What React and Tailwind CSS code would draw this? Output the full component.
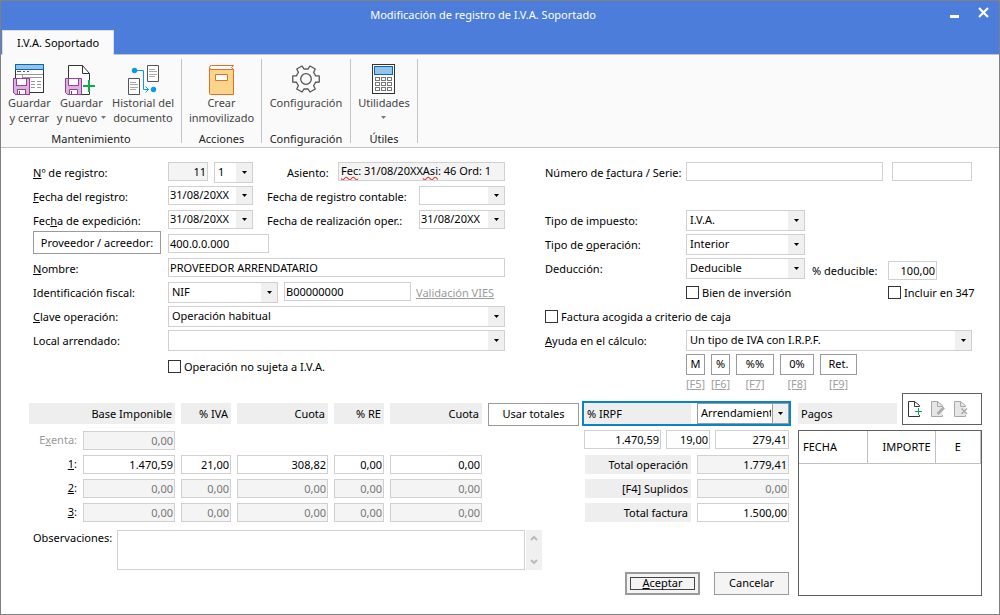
import { useState } from "react";
import clsx from "clsx";

const INPUT = "h-[19px] min-w-0 border border-[#d0d0d0] bg-white px-0.5 leading-4 text-black outline-none";
const INPUT_OFF = "h-[19px] min-w-0 border border-[#d0d0d0] bg-[#f4f4f4] px-0.5 leading-4 outline-none";
const BUTTON = "border border-[#9a9a9a] bg-white text-center text-black";
const HEAD = "h-[21px] bg-[#eeeeee] px-[3px] leading-[21px] font-normal";

const gearPath = [0, 60, 120, 180, 240, 300]
  .map((angle, i) => {
    const point = (r, deg) => {
      const a = ((angle + deg) * Math.PI) / 180;
      return `${(15 + r * Math.cos(a)).toFixed(2)} ${(15 + r * Math.sin(a)).toFixed(2)}`;
    };
    return `${i ? "A10 10 0 0 1" : "M"} ${point(10, -19)} L${point(13.6, -13)} L${point(13.6, 13)} L${point(10, 19)}`;
  })
  .join(" ");

function Floppy() {
  return (
    <g transform="translate(0 15)">
      <path d="M.5 .5H16.5V16.5H2.5L.5 14.5Z" fill="#d9b3dc" stroke="#9b3d9e" />
      <path d="M3.5 .5H13.5V7.5H3.5Z" fill="#fff" stroke="#9b3d9e" />
      <path d="M4.5 11.5H12.5V16.5H4.5Z" fill="#fff" stroke="#9b3d9e" />
      <path d="M6.5 13V16" stroke="#555" />
    </g>
  );
}

function SaveCloseIcon() {
  return (
    <svg width="32" height="32" viewBox="0 0 32 32" fill="none" shapeRendering="crispEdges" aria-hidden="true">
      <path d="M2.5 1.5H30.5V29.5H2.5Z" fill="#fff" stroke="#333" />
      <path d="M2.5 1.5H30.5V6.5H2.5Z" fill="#92c5ee" stroke="#0f65ad" />
      <path d="M4 8.5H8M10 8.5H12M14 8.5H16" stroke="#555" />
      <path d="M3 11.5H30M9.5 11V15" stroke="#999" />
      <path d="M10 14.5H29" stroke="#999" />
      <path d="M18 18.5H22M24 18.5H28M18 21.5H22M24 21.5H28M18 24.5H22M24 24.5H28" stroke="#999" />
      <Floppy />
    </svg>
  );
}

function SaveNewIcon() {
  return (
    <svg width="32" height="32" viewBox="0 0 32 32" fill="none" aria-hidden="true">
      <path d="M3.5 2.5H17.5L24.5 10.5V31.5H3.5Z" fill="#fff" stroke="#333" />
      <path d="M17.5 2.5V10.5H24.5" stroke="#333" />
      <path d="M17 17H32V29H17Z" fill="#fafafa" />
      <Floppy />
      <path d="M24 17V29M18 23H30" stroke="#12a84c" strokeWidth="2" />
    </svg>
  );
}

function HistoryIcon() {
  return (
    <svg width="33" height="32" viewBox="0 0 33 32" fill="none" aria-hidden="true">
      <path d="M20.5 2.5H31.5V18.5H20.5Z" fill="#fff" stroke="#555" />
      <path d="M22 6.5H28M22 8.5H30M22 11.5H30M22 13.5H28" stroke="#aaa" />
      <path d="M1.5 15.5H12.5V31.5H1.5Z" fill="#fff" stroke="#555" />
      <path d="M3 19.5H9M3 21.5H11M3 24.5H11M3 26.5H9" stroke="#aaa" />
      <path d="M8 7.5H16.5V26.5H22M18.5 23.5L21.5 26.5L18.5 29.5" stroke="#0a9be3" />
      <circle cx="7.5" cy="7.5" r="2.7" fill="#0a9be3" />
      <circle cx="26.5" cy="26.5" r="2.7" fill="#0a9be3" />
    </svg>
  );
}

function BookIcon() {
  return (
    <svg width="30" height="32" viewBox="0 0 30 32" fill="none" aria-hidden="true">
      <path d="M2.5 4.5V30.5Q2.5 31.5 3.5 31.5H26.5V6.5H4.5Q2.5 6.5 2.5 4.5Z" fill="#f8d58b" stroke="#e66f25" />
      <path d="M26.5 2.5H4.5Q2.5 2.5 2.5 4.5T4.5 6.5H26.5L24.5 4.5Z" fill="#fff" stroke="#e66f25" />
      <path d="M8.5 11.5H20.5V17.5H8.5Z" fill="#fff" stroke="#e66f25" />
    </svg>
  );
}

function GearIcon() {
  return (
    <svg width="30" height="32" viewBox="0 -1 30 32" fill="none" stroke="#555" strokeWidth="1.3" strokeLinejoin="round" aria-hidden="true">
      <path d={`${gearPath} A10 10 0 0 1 24.46 11.74Z`} />
      <circle cx="15" cy="15" r="5.3" />
    </svg>
  );
}

function CalculatorIcon() {
  return (
    <svg width="24" height="32" viewBox="0 0 24 32" fill="none" shapeRendering="crispEdges" aria-hidden="true">
      <path d="M.5 1.5H22.5V30.5H.5Z" fill="#fff" stroke="#333" />
      <path d="M2.5 3.5H20.5V11.5H2.5Z" fill="#92c5ee" stroke="#0f65ad" />
      {[14, 19, 24].map((y) =>
        [3, 9, 15].map((x) => <rect key={`${x}-${y}`} x={x + 0.5} y={y + 0.5} width="4" height="3" stroke="#777" />)
      )}
    </svg>
  );
}

function PageIcon({ kind }) {
  const on = kind === "add";
  return (
    <svg width="16" height="18" viewBox="0 0 16 18" fill="none" aria-hidden="true">
      <path
        d="M12.5 6.5V5.5L7.5 1.5H1.5V16.5H12.5V15"
        fill={on ? "#fff" : "#e6e6e6"}
        stroke={on ? "#333" : "#a8a8a8"}
      />
      <path d="M7.5 1.5V6.5H12.5" stroke={on ? "#333" : "#a8a8a8"} />
      {kind === "add" && <path d="M11.5 8V15M8 11.5H15" stroke="#12a84c" />}
      {kind === "edit" && <path d="M14 7.5L7.5 14" stroke="#aaa" strokeWidth="2.5" />}
      {kind === "delete" && <path d="M8.5 8.5L14 14M14 8.5L8.5 14" stroke="#aaa" strokeWidth="1.5" />}
    </svg>
  );
}

function Caret({ className }) {
  return (
    <svg width="5" height="3" viewBox="0 0 5 3" className={className} aria-hidden="true">
      <path d="M0 0H5L2.5 3Z" fill="currentColor" />
    </svg>
  );
}

function Combo({ id, label, value, date, className }) {
  return (
    <div className={clsx("relative min-w-0", date ? "h-[19px]" : "h-[21px]", className)}>
      <select
        id={id}
        aria-label={label}
        defaultValue={value}
        className={clsx(
          "block h-full w-full appearance-none border border-[#d0d0d0] bg-white pr-4 text-black outline-none",
          date ? "pb-0.5 pl-px leading-[15px]" : "pb-px pl-[3px] leading-[18px]"
        )}
      >
        <option>{value}</option>
      </select>
      <span className="pointer-events-none absolute inset-y-px right-px flex w-4 items-center justify-center bg-[#f0f0f0]">
        <Caret />
      </span>
    </div>
  );
}

function Check({ id, children }) {
  const [checked, setChecked] = useState(false);
  return (
    <label htmlFor={id} className="flex items-center gap-[3px] whitespace-nowrap">
      <input
        id={id}
        type="checkbox"
        checked={checked}
        onChange={() => setChecked(!checked)}
        className="size-[13px] shrink-0 appearance-none border border-[#333] bg-white checked:bg-[#333]"
      />
      {children}
    </label>
  );
}

function Row({ className, children }) {
  return <div className={clsx("flex h-[21px] items-start leading-[21px]", className)}>{children}</div>;
}

function Label({ htmlFor, className = "w-[135px]", children }) {
  return (
    <label htmlFor={htmlFor} className={clsx("shrink-0 whitespace-nowrap", className)}>
      {children}
    </label>
  );
}

function RibbonButton({ icon, lines, caret }) {
  return (
    <button type="button" className="flex flex-col items-center leading-[15px] whitespace-nowrap text-[#444]">
      {icon}
      <span>{lines[0]}</span>
      <span className="flex h-[15px] items-center gap-1">
        {lines[1]}
        {caret && <Caret className="text-[#777]" />}
      </span>
    </button>
  );
}

function RibbonGroup({ title, className, children }) {
  return (
    <section className={clsx("flex h-[84px] flex-col justify-between border-r border-[#c4c4c4]", className)}>
      <div className="flex justify-center gap-1.5 pt-1">{children}</div>
      <h2 className="text-center leading-2 text-[#222]">{title}</h2>
    </section>
  );
}

const amountRows = [
  { key: "1", values: ["1.470,59", "21,00", "308,82", "0,00", "0,00"], active: true },
  { key: "2", values: ["0,00", "0,00", "0,00", "0,00", "0,00"] },
  { key: "3", values: ["0,00", "0,00", "0,00", "0,00", "0,00"] },
];

const columns = ["Base Imponible", "% IVA", "Cuota", "% RE", "Cuota"];

const shortcuts = [
  { text: "M", hint: "[F5]", width: "w-[19px]" },
  { text: "%", hint: "[F6]", width: "w-[19px]" },
  { text: "%%", hint: "[F7]", width: "w-[38px]" },
  { text: "0%", hint: "[F8]", width: "w-[34px]" },
  { text: "Ret.", hint: "[F9]", width: "w-[37px]" },
];

const totals = [
  { id: "total-operacion", label: "Total operación", value: "1.779,41", style: clsx(INPUT_OFF, "text-black") },
  { id: "suplidos", label: "[F4] Suplidos", value: "0,00", style: clsx(INPUT_OFF, "text-[#777]") },
  { id: "total-factura", label: "Total factura", value: "1.500,00", style: INPUT },
];

function Header() {
  return (
    <header className="bg-[#4d7ddb]">
      <div className="flex h-[29px] items-center pr-2.5">
        <h1 className="flex-1 pl-4 text-center text-white">Modificación de registro de I.V.A. Soportado</h1>
        <div className="flex gap-[18px]">
          <button type="button" aria-label="Minimizar">
            <svg width="11" height="11" viewBox="0 0 11 11"><path d="M1 5H10V8H1Z" fill="#fff" /></svg>
          </button>
          <button type="button" aria-label="Cerrar" className="pb-1.5">
            <svg width="11" height="11" viewBox="0 0 11 11"><path d="M1 1L10 10M10 1L1 10" stroke="#fff" strokeWidth="2.2" /></svg>
          </button>
        </div>
      </div>
      <div className="flex items-end border-b border-[#c4c4c4] pl-px">
        <button type="button" className="-mb-px h-[25px] border border-b-0 border-[#dcdcdc] bg-[#fafafa] px-3.5 whitespace-nowrap">
          I.V.A. Soportado
        </button>
      </div>
    </header>
  );
}

function Ribbon() {
  return (
    <nav className="flex border-b border-[#c4c4c4] bg-[#fafafa] pt-1 pb-1">
      <RibbonGroup title="Mantenimiento" className="w-[181px]">
        <RibbonButton icon={<SaveCloseIcon />} lines={["Guardar", "y cerrar"]} />
        <RibbonButton icon={<SaveNewIcon />} lines={["Guardar", "y nuevo"]} caret />
        <RibbonButton icon={<HistoryIcon />} lines={["Historial del", "documento"]} />
      </RibbonGroup>
      <RibbonGroup title="Acciones" className="w-20">
        <RibbonButton icon={<BookIcon />} lines={["Crear", "inmovilizado"]} />
      </RibbonGroup>
      <RibbonGroup title="Configuración" className="w-[89px]">
        <RibbonButton icon={<GearIcon />} lines={["Configuración", ""]} />
      </RibbonGroup>
      <RibbonGroup title="Útiles" className="w-[67px]">
        <RibbonButton icon={<CalculatorIcon />} lines={["Utilidades", ""]} caret />
      </RibbonGroup>
    </nav>
  );
}

function RegistroForm() {
  return (
    <div className="flex min-w-0 flex-[472] flex-col gap-[3px]">
      <Row>
        <Label htmlFor="registro"><u>N</u>º de registro:</Label>
        <input id="registro" readOnly defaultValue="11" className={clsx(INPUT_OFF, "w-10 px-px text-right")} />
        <Combo label="Serie de registro" value="1" className="ml-1.5 w-[39px]" />
        <Label htmlFor="asiento" className="ml-[34px] w-[51px]">Asiento:</Label>
        <output id="asiento" className={clsx(INPUT_OFF, "flex-1 overflow-hidden whitespace-pre")}>
          <span className="underline decoration-[#e03030] decoration-wavy">Fec</span>: 31/08/20XX
          <span className="underline decoration-[#e03030] decoration-wavy">Asi</span>: 46 Ord: 1
        </output>
      </Row>
      <Row>
        <Label htmlFor="fecha-registro"><u>F</u>echa del registro:</Label>
        <Combo id="fecha-registro" value="31/08/20XX" date className="w-[85px]" />
        <Label htmlFor="fecha-contable" className="ml-3.5 flex-1">Fecha de registro contable:</Label>
        <Combo id="fecha-contable" value="" date className="w-[86px]" />
      </Row>
      <Row>
        <Label htmlFor="fecha-expedicion">Fec<u>h</u>a de expedición:</Label>
        <Combo id="fecha-expedicion" value="31/08/20XX" date className="w-[85px]" />
        <Label htmlFor="fecha-realizacion" className="ml-3.5 flex-1">Fecha de realización oper.:</Label>
        <Combo id="fecha-realizacion" value="31/08/20XX" date className="w-[86px]" />
      </Row>
      <Row>
        <button type="button" className={clsx(BUTTON, "-mt-[3px] mr-[7px] h-[23px] w-32 shrink-0")}>Proveedor / acreedor:</button>
        <input aria-label="Proveedor / acreedor" defaultValue="400.0.0.000" className={clsx(INPUT, "w-[101px] px-px")} />
      </Row>
      <Row>
        <Label htmlFor="nombre"><u>N</u>ombre:</Label>
        <input id="nombre" defaultValue="PROVEEDOR ARRENDATARIO" className={clsx(INPUT, "flex-1 px-px")} />
      </Row>
      <Row>
        <Label htmlFor="identificacion">Identificación fiscal:</Label>
        <Combo id="identificacion" value="NIF" className="w-[110px]" />
        <input aria-label="Número de identificación" defaultValue="B00000000" className={clsx(INPUT, "ml-1.5 flex-1 px-px")} />
        <a href="#vies" className="ml-[5px] w-[89px] whitespace-nowrap text-[#9a9a9a] underline">Validación VIES</a>
      </Row>
      <Row>
        <Label htmlFor="clave"><u>C</u>lave operación:</Label>
        <Combo id="clave" value="Operación habitual" className="flex-1" />
      </Row>
      <Row>
        <Label htmlFor="local">Local arrendado:</Label>
        <Combo id="local" value="" className="flex-1" />
      </Row>
      <Row className="mt-0.5 pl-[135px]">
        <Check id="no-sujeta">Operación no sujeta a I.V.A.</Check>
      </Row>
    </div>
  );
}

function FacturaForm() {
  return (
    <div className="flex min-w-0 flex-[427] flex-col gap-[3px]">
      <Row>
        <Label htmlFor="numero" className="w-[141px]">Número de <u>f</u>actura / Serie:</Label>
        <input id="numero" className={clsx(INPUT, "flex-1")} />
        <input aria-label="Serie" className={clsx(INPUT, "ml-[9px] w-20")} />
      </Row>
      <Row />
      <Row>
        <Label htmlFor="impuesto" className="w-[141px]">Tipo de impuesto:</Label>
        <Combo id="impuesto" value="I.V.A." className="w-[119px]" />
      </Row>
      <Row>
        <Label htmlFor="operacion" className="w-[141px]">Tipo de <u>o</u>peración:</Label>
        <Combo id="operacion" value="Interior" className="w-[119px]" />
      </Row>
      <Row>
        <Label htmlFor="deduccion" className="w-[141px]">Deducción:</Label>
        <Combo id="deduccion" value="Deducible" className="w-[119px]" />
        <div className="ml-[7px] flex pt-[3px] leading-[19px]">
          <Label htmlFor="deducible" className="w-[76px]">% deducible:</Label>
          <input id="deducible" defaultValue="100,00" className={clsx(INPUT, "w-[49px] px-px text-right")} />
        </div>
      </Row>
      <Row className="pl-[141px]">
        <div className="w-[202px] shrink-0">
          <Check id="inversion">Bien de inversión</Check>
        </div>
        <Check id="incluir">Incluir en 347</Check>
      </Row>
      <Row>
        <Check id="criterio">Factura acogida a criterio de caja</Check>
      </Row>
      <Row>
        <Label htmlFor="ayuda" className="w-[141px]"><u>A</u>yuda en el cálculo:</Label>
        <Combo id="ayuda" value="Un tipo de IVA con I.R.P.F." className="flex-1" />
      </Row>
      <div className="flex gap-1.5 pl-[141px]">
        {shortcuts.map((s) => (
          <div key={s.hint} className={clsx("flex flex-col items-center gap-0.5", s.width)}>
            <button type="button" className={clsx(BUTTON, "h-[21px] w-full")}>{s.text}</button>
            <a href={`#${s.text}`} className="leading-[14px] text-[#a0a0a0] underline">{s.hint}</a>
          </div>
        ))}
      </div>
    </div>
  );
}

function Amounts() {
  return (
    <table className="w-full table-fixed border-collapse">
      <colgroup>
        <col className="w-12" />
        <col className="w-[98px]" />
        <col className="w-14" />
        <col className="w-[97px]" />
        <col className="w-14" />
        <col className="w-[98px]" />
      </colgroup>
      <thead>
        <tr>
          {columns.map((name, i) => (
            <th key={i} colSpan={i === 0 ? 2 : 1} className={clsx("p-0 text-right", i > 0 && "pl-1.5")}>
              <div className={HEAD}>{name}</div>
            </th>
          ))}
        </tr>
      </thead>
      <tbody>
        <tr>
          <th className="pt-[7px] pr-0 text-right font-normal whitespace-nowrap text-[#9a9a9a]">
            <label htmlFor="exenta">E<u>x</u>enta:</label>
          </th>
          <td className="pt-[7px] pl-1.5">
            <input id="exenta" readOnly defaultValue="0,00" className={clsx(INPUT_OFF, "block w-full px-px text-right text-[#777]")} />
          </td>
        </tr>
        {amountRows.map((row) => (
          <tr key={row.key}>
            <th className="pt-[5px] pr-0 text-right font-normal">
              <label htmlFor={`linea-${row.key}-0`}><u>{row.key}</u>:</label>
            </th>
            {row.values.map((value, i) => (
              <td key={i} className="pt-[5px] pl-1.5">
                <input
                  id={`linea-${row.key}-${i}`}
                  aria-label={`${columns[i]} ${row.key}`}
                  readOnly={!row.active}
                  defaultValue={value}
                  className={clsx(row.active ? INPUT : clsx(INPUT_OFF, "text-[#777]"), "block w-full px-px text-right")}
                />
              </td>
            ))}
          </tr>
        ))}
      </tbody>
    </table>
  );
}

function Retenciones() {
  return (
    <div className="flex w-[209px] flex-col">
      <div className="flex h-[25px] border-2 border-[#0a84c6]">
        <label htmlFor="irpf" className={clsx(HEAD, "w-[107px]")}>% IRPF</label>
        <div className="relative ml-1.5 flex-1">
          <select id="irpf" className="block h-full w-full appearance-none overflow-hidden border border-[#9a9a9a] bg-white pr-[17px] pl-[3px] outline-none">
            <option>Arrendamientos</option>
          </select>
          <span className="pointer-events-none absolute inset-y-px right-px flex w-4 items-center justify-center border-l border-[#9a9a9a] bg-[#f0f0f0]">
            <Caret />
          </span>
        </div>
      </div>
      <div className="mt-1 flex gap-[5px] pr-0.5 pl-0.5">
        <input aria-label="Base IRPF" defaultValue="1.470,59" className={clsx(INPUT, "w-[77px] px-px text-right")} />
        <input aria-label="Porcentaje IRPF" defaultValue="19,00" className={clsx(INPUT, "w-11 px-px text-right")} />
        <input aria-label="Cuota IRPF" defaultValue="279,41" className={clsx(INPUT, "flex-1 px-px text-right")} />
      </div>
      <div className="mt-[6px] flex flex-col gap-[5px] pr-0.5 pl-[3px]">
        {totals.map((t) => (
          <div key={t.id} className="flex gap-1.5">
            <label htmlFor={t.id} className="h-[19px] w-[106px] bg-[#eeeeee] px-[3px] text-right leading-[19px]">{t.label}</label>
            <input id={t.id} defaultValue={t.value} className={clsx(t.style, "flex-1 px-px text-right")} />
          </div>
        ))}
      </div>
      <div className="mt-[50px] flex justify-end gap-3.5 pr-0.5">
        <button type="button" className="h-[23px] w-[75px] border-2 border-[#9a9a9a] bg-[#f4f4f4] p-[3px]">
          <span className="flex h-full items-center justify-center border border-[#444]">
            <span><u>A</u>ceptar</span>
          </span>
        </button>
        <button type="button" className="h-[23px] w-[75px] border border-[#9a9a9a] bg-[#f4f4f4]">Cancelar</button>
      </div>
    </div>
  );
}

function Pagos() {
  return (
    <div className="flex w-[184px] flex-col">
      <div className="flex items-end gap-[5px]">
        <h2 className={clsx(HEAD, "mb-px flex-1")}>Pagos</h2>
        <div className="flex h-8 w-20 items-center gap-[7px] border border-[#606060] pl-1">
          <button type="button" aria-label="Añadir pago"><PageIcon kind="add" /></button>
          <button type="button" aria-label="Editar pago" disabled><PageIcon kind="edit" /></button>
          <button type="button" aria-label="Borrar pago" disabled><PageIcon kind="delete" /></button>
        </div>
      </div>
      <div className="mt-[5px] min-h-[166px] flex-1 border border-[#606060]">
        <table className="w-full table-fixed border-collapse">
          <thead>
            <tr className="h-8 border-b border-[#c0c0c0]">
              <th className="w-[68px] border-r border-[#c0c0c0] px-1 text-left font-normal">FECHA</th>
              <th className="w-[68px] border-r border-[#c0c0c0] px-1 text-right font-normal">IMPORTE</th>
              <th className="border-r border-[#c0c0c0] font-normal">E</th>
            </tr>
          </thead>
          <tbody />
        </table>
      </div>
    </div>
  );
}

export default function App() {
  return (
    <div className="flex min-h-screen flex-col border border-[#808080] bg-white font-['Noto_Sans','Open_Sans',sans-serif] text-[11px] text-black">
      <Header />
      <Ribbon />
      <main className="flex flex-1 flex-col pt-3.5">
        <div className="flex gap-10 pr-[27px] pl-8">
          <RegistroForm />
          <FacturaForm />
        </div>
        <div className="mt-0.5 flex flex-1 pr-[17px] pb-[18px] pl-7">
          <div className="min-w-0 flex-1 pt-2.5">
            <div className="flex items-start gap-1.5">
              <div className="min-w-0 flex-1">
                <Amounts />
              </div>
              <button type="button" className={clsx(BUTTON, "h-[23px] w-[91px]")}>Usar totales</button>
            </div>
            <div className="mt-2 mr-[37px] flex pl-1">
              <label htmlFor="observaciones" className="w-[84px] whitespace-nowrap">Observaciones:</label>
              <textarea id="observaciones" className="h-10 min-w-0 flex-1 resize-none border border-[#d0d0d0] outline-none" />
              <div className="ml-px flex w-4 flex-col items-center justify-between bg-[#f0f0f0] py-[5px]">
                <svg width="8" height="6" viewBox="0 0 8 6" fill="none" stroke="#bbb" strokeWidth="2" aria-hidden="true"><path d="M1 5L4 2L7 5" /></svg>
                <svg width="8" height="6" viewBox="0 0 8 6" fill="none" stroke="#bbb" strokeWidth="2" aria-hidden="true"><path d="M1 1L4 4L7 1" /></svg>
              </div>
            </div>
          </div>
          <div className="ml-[3px] pt-2">
            <Retenciones />
          </div>
          <div className="ml-[7px] flex">
            <Pagos />
          </div>
        </div>
      </main>
    </div>
  );
}
